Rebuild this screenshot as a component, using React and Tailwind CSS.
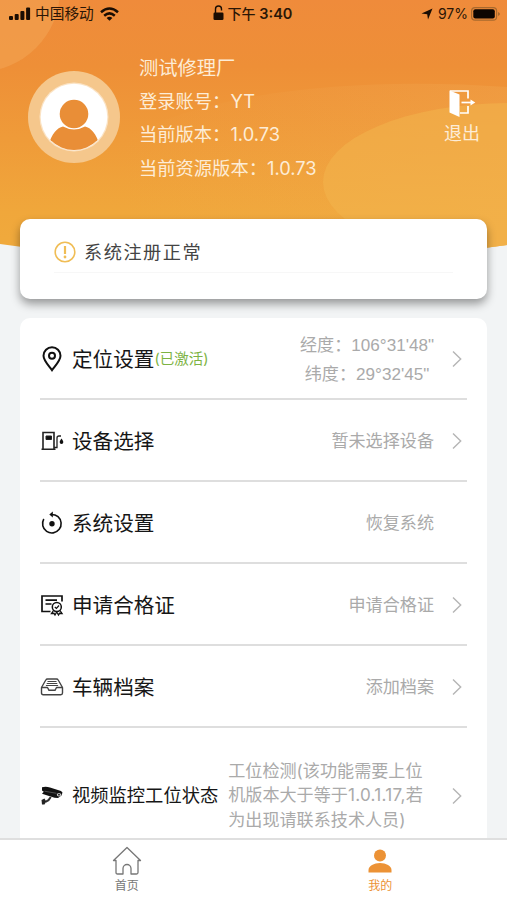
import React from "react";

const LocationIcon = () => (
  <svg width="22" height="26" viewBox="0 0 22 26" fill="none" stroke="#111" strokeWidth="2">
    <path d="M11 24.2C8 20 2.5 14.5 2.5 9.700a8.500 8.500 0 0 1 17 0C19.500 14.500 14 20 11 24.200Z" />
    <circle cx="11" cy="9.800" r="3" />
  </svg>
);

const DeviceIcon = () => (
  <svg width="24" height="22" viewBox="0 0 24 22" fill="none" stroke="#222" strokeWidth="1.600">
    <path d="M3 19V2.500H14V19M1.500 19.300H15.500" />
    <path d="M6 6H11.500V9.500H6Z" fill="#111" strokeWidth="1" />
    <path d="M14 17.500H17V8Q17 6 19 6H21" strokeWidth="1.300" />
    <path d="M21.500 8.500C20.500 10 19.700 11 19.700 12.200a1.800 1.800 0 0 0 3.600 0C23.300 11 22.500 10 21.500 8.500Z" fill="#111" stroke="none" />
  </svg>
);

const ResetIcon = () => (
  <svg width="22" height="24" viewBox="0 0 22 24" fill="none" stroke="#111" strokeWidth="1.600">
    <path d="M2.800 8A9.300 9.300 0 1 0 17 5.700Q14.500 3.500 10 3.500" />
    <path d="M8.300 3.500L11.800 0.600V6.400Z" fill="#111" stroke="none" />
    <circle cx="11" cy="12.800" r="2.700" fill="#111" stroke="none" />
  </svg>
);

const CertificateIcon = () => (
  <svg width="24" height="24" viewBox="0 0 24 24" fill="none" stroke="#111" strokeWidth="1.700">
    <path d="M10.500 18.500H2V3H22V8.500M5.500 7.200H17M5.500 11H11.500" />
    <circle cx="16.800" cy="14" r="4.500" strokeWidth="1.500" />
    <path d="M14.800 14L16.400 15.500L19 12.500" strokeWidth="1.200" />
    <path d="M13.500 17.500L11.500 20.500L14 20.300L15 22L16.700 19L18.500 22L19.500 20.300L22 20.500L20 17.500" strokeWidth="1.300" />
  </svg>
);

const ArchiveIcon = () => (
  <svg width="24" height="20" viewBox="0 0 24 20" fill="none" stroke="#444" strokeWidth="1.400" strokeLinejoin="round">
    <path d="M1.500 10.500L5.800 3Q6.300 2 7.500 2H16.500Q17.700 2 18.200 3L22.500 10.500V16Q22.500 17.700 20.800 17.700H3.200Q1.500 17.700 1.500 16Z" />
    <path d="M1.800 10.500H7.500L9 13.300H15L16.500 10.500H22.200" />
    <path d="M7.500 4.500H16.500M6.700 6.500H17.300M5.900 8.500H18.100" strokeWidth="1.100" />
  </svg>
);

const CameraIcon = () => (
  <svg width="24" height="22" viewBox="0 0 24 22">
    <path d="M2 2.200Q6 1 10 2.500L21 6L22.500 7.500L21.500 10.500L18 13L14.500 12.700L2 8.800L3.800 6.800L2 5.500Z" fill="#111" />
    <path d="M4.500 6.200L16.500 8.300" stroke="#888" strokeWidth="0.500" />
    <ellipse cx="19" cy="9.700" rx="2.200" ry="1.700" fill="#ccc" />
    <circle cx="19" cy="9.700" r="0.900" fill="#111" />
    <path d="M10.800 12L8.500 15.200L5.500 16.800" fill="none" stroke="#333" strokeWidth="2" />
    <path d="M1.500 15L4.500 13.500L6.200 16.500L4.500 19.500L2 19.500Z" fill="#222" />
  </svg>
);

const menuItems = [
  {
    icon: <LocationIcon />,
    label: "定位设置",
    tag: "(已激活)",
    value: ["经度：106°31'48\"", "纬度：29°32'45\""],
    arrow: true,
  },
  { icon: <DeviceIcon />, label: "设备选择", value: ["暂未选择设备"], arrow: true },
  { icon: <ResetIcon />, label: "系统设置", value: ["恢复系统"], arrow: false },
  { icon: <CertificateIcon />, label: "申请合格证", value: ["申请合格证"], arrow: true },
  { icon: <ArchiveIcon />, label: "车辆档案", value: ["添加档案"], arrow: true },
];

const Arrow = () => (
  <svg className="shrink-0" width="10" height="18" viewBox="0 0 10 18" fill="none" stroke="#b5b5b5" strokeWidth="1.400">
    <path d="M1 1.500L8.700 9L1 16.500" />
  </svg>
);

const StatusBar = () => (
  <div className="grid h-7 shrink-0 grid-cols-[1fr_auto_1fr] items-center pl-[9px] pr-[6px] text-[14px] text-[#2a1606]">
    <div className="flex items-center">
      <svg width="22" height="14" viewBox="0 0 22 14" fill="#1a0d03">
        <rect x="0" y="9" width="4" height="4" rx="1" />
        <rect x="5.700" y="7" width="4" height="6" rx="1" />
        <rect x="11.400" y="4" width="4" height="9" rx="1" />
        <rect x="17.100" y="0.500" width="4" height="12.500" rx="1" />
      </svg>
      <span className="ml-[4px] text-[14.700px]">中国移动</span>
      <svg className="ml-[6px]" width="19" height="14" viewBox="0 0 19 14" fill="none" stroke="#1a0d03" strokeWidth="2.500">
        <path d="M1 5.300Q9.500 -2.300 18 5.300" />
        <path d="M4.200 8.700Q9.500 4.100 14.800 8.700" />
        <path d="M6.600 10.900Q9.500 8.700 12.400 10.900L9.500 13.800Z" fill="#1a0d03" stroke="none" />
      </svg>
    </div>
    <div className="flex items-center gap-[4px] pr-[5px]">
      <svg className="-mt-[3px]" width="11" height="16" viewBox="0 0 11 16">
        <path d="M2.500 8V4a3 3 0 0 1 6 0V5.500" fill="none" stroke="#1a0d03" strokeWidth="1.400" />
        <rect x="0.500" y="7.500" width="10" height="7.500" rx="1.300" fill="#1a0d03" />
      </svg>
      <span className="-mt-px whitespace-nowrap font-medium">
        下午 <span className="text-[14.500px] font-semibold">3:40</span>
      </span>
    </div>
    <div className="flex items-center justify-end">
      <svg width="12" height="12" viewBox="0 0 12 12" fill="#1a0d03">
        <path d="M11.500 0.500L7 11.500L6.200 6.300L0.500 5.600Z" />
      </svg>
      <span className="-mt-px ml-[5px] mr-[3px] text-[14px]">97%</span>
      <svg className="-mt-[1px]" width="30" height="14" viewBox="0 0 30 14">
        <rect x="0.600" y="0.600" width="25" height="12.600" rx="3.500" fill="none" stroke="#a8692e" strokeWidth="1.200" />
        <rect x="2.300" y="2.300" width="21.500" height="9.200" rx="2" fill="#0d0501" />
        <path d="M27 5V9Q29 8 29 7T27 5Z" fill="#a8692e" />
      </svg>
    </div>
  </div>
);

const HeaderBackground = () => (
  <svg className="absolute left-0 top-0" width="507" height="265" viewBox="0 0 507 265">
    <defs>
      <linearGradient id="sky" x1="0" y1="0" x2="0" y2="1">
        <stop offset="0" stopColor="#ef8b3b" />
        <stop offset="0.250" stopColor="#ee8f37" />
        <stop offset="0.800" stopColor="#f0a73b" />
        <stop offset="1" stopColor="#f0ab3d" />
      </linearGradient>
      <linearGradient id="band" x1="0" y1="0" x2="1" y2="0">
        <stop offset="0" stopColor="#f3b25c" stopOpacity="0" />
        <stop offset="1" stopColor="#f3b25c" stopOpacity="0.250" />
      </linearGradient>
      <clipPath id="curve">
        <path d="M0 0H507V245Q254 282 0 244Z" />
      </clipPath>
    </defs>
    <g clipPath="url(#curve)">
      <rect width="507" height="265" fill="url(#sky)" />
      <circle cx="-22" cy="-10" r="82" fill="#f3aa5c" opacity="0.450" />
      <path d="M120 140C220 85 380 78 507 87V265H120Z" fill="url(#band)" />
      <ellipse cx="510" cy="182" rx="187" ry="79" fill="#f2b54d" opacity="0.550" />
      <path d="M480 245H507V265H480Z" fill="#f1b146" opacity="0.600" />
    </g>
  </svg>
);

const App = () => {
  return (
    <div className="relative flex h-[900px] w-[507px] flex-col overflow-hidden bg-[#f2f4f5] font-['Inter','Noto_Sans_CJK_SC',sans-serif]">
      <HeaderBackground />

      <div className="relative flex min-h-0 flex-1 flex-col">
        <StatusBar />

        {/* User info */}
        <div className="flex h-[191px] shrink-0 items-start pl-[28px] pr-[27px]">
          <svg className="mt-[43px]" width="92" height="92" viewBox="0 0 92 92">
            <defs>
              <clipPath id="avatar">
                <circle cx="46" cy="46" r="33" />
              </clipPath>
            </defs>
            <circle cx="46" cy="46" r="46" fill="#f5c78c" />
            <circle cx="46" cy="46" r="34.500" fill="#fbe3c4" />
            <circle cx="46" cy="46" r="33.300" fill="#fff" />
            <g clipPath="url(#avatar)">
              <path d="M20 75C24 62 29 57 35 55.500Q46 61.500 57 55.500C63 57 68 62 72 75V80H20Z" fill="#e98e37" />
              <circle cx="46" cy="43" r="14.300" fill="#e98e37" />
            </g>
          </svg>
          <div className="ml-[19px] mt-[24px] flex-1 text-[18.300px] leading-[33.200px] text-[#fdecd6]">
            <p className="text-[19.300px]">测试修理厂</p>
            <p>登录账号：YT</p>
            <p>当前版本：1.0.73</p>
            <p>当前资源版本：1.0.73</p>
          </div>
          <div className="mt-[61px] flex flex-col items-center text-[18px] leading-[31px] text-[#fdecd6]">
            <svg width="28" height="29" viewBox="0 0 28 29" fill="none" stroke="#fff" strokeWidth="1.700">
              <path d="M2 2H20V9.500M20 17V24H12" />
              <path d="M1.500 1.500L11.500 5.500V28L1.500 23.500Z" fill="#fff" stroke="none" />
              <path d="M13.500 13.500H24" />
              <path d="M22.500 10.500L27.300 13.500L22.500 16.500Z" fill="#fff" stroke="none" />
            </svg>
            <span>退出</span>
          </div>
        </div>

        {/* Register status */}
        <div className="mx-5 h-[80px] shrink-0 rounded-[10px] bg-white pl-[34px] pr-[34px] shadow-[0_5px_10px_rgba(0,0,0,0.38)]">
          <div className="flex h-[54px] items-center border-b border-[#f7f7f7] pt-[12px]">
            <svg width="22" height="22" viewBox="0 0 22 22" fill="none" stroke="#f0bd55" strokeWidth="1.600">
              <circle cx="11" cy="11" r="9.800" />
              <path d="M11 5V13" strokeWidth="2.200" />
              <circle cx="11" cy="16" r="1.400" fill="#f0bd55" stroke="none" />
            </svg>
            <span className="ml-[8px] pt-[2px] text-[18.200px] tracking-[1.500px] text-[#444]">系统注册正常</span>
          </div>
        </div>

        {/* Settings list */}
        <div className="mx-5 mt-[19px] rounded-t-[10px] bg-white px-5">
          {menuItems.map((item) => (
            <div
              key={item.label}
              className="flex h-[82px] items-center border-b-2 border-[#dedede] pr-[5px] pt-[2px]"
            >
              <div className="flex w-[24px] justify-center">{item.icon}</div>
              <span className="ml-[8px] pt-[3px] text-[20.600px] text-[#161616]">{item.label}</span>
              {item.tag && <span className="text-[14.500px] text-[#7db343]">{item.tag}</span>}
              <div className="ml-auto pt-px text-center font-['Liberation_Sans','Noto_Sans_CJK_SC',sans-serif] text-[17.100px] leading-[29px] text-[#aaa]">
                {item.value.map((line) => (
                  <p key={line}>{line}</p>
                ))}
              </div>
              <div className="ml-[18px] flex w-[10px]">{item.arrow && <Arrow />}</div>
            </div>
          ))}
          <div className="flex h-[135px] items-center pr-[5px]">
            <CameraIcon />
            <span className="ml-[8px] whitespace-nowrap text-[18.300px] text-[#161616]">视频监控工位状态</span>
            <div className="ml-[10px] whitespace-nowrap text-[17.100px] leading-[24.300px] text-[#aaa]">
              <p>工位检测(该功能需要上位</p>
              <p>
                机版本大于等于<span className="tracking-[0.300px]">1.0.1.17,</span>若
              </p>
              <p>为出现请联系技术人员)</p>
            </div>
            <div className="ml-auto flex">
              <Arrow />
            </div>
          </div>
        </div>
      </div>

      {/* Bottom tabs */}
      <div className="relative grid h-[62px] shrink-0 grid-cols-2 border-t-2 border-[#dfdfdf] bg-white text-[12px] leading-[19px]">
        <div className="flex flex-col items-center pt-[6px] text-[#777]">
          <svg width="30" height="30" viewBox="0 0 30 30" fill="none" stroke="#777" strokeWidth="1.300" strokeLinejoin="round">
            <path d="M1.500 14.500L15 1.500L28.500 14.500H26V26.500Q26 28 24.500 28H19V22.500a4 4 0 0 0 -8 0V28H5.500Q4 28 4 26.500V14.500Z" />
          </svg>
          <span>首页</span>
        </div>
        <div className="flex flex-col items-center pt-[6px] text-[#ec9235]">
          <svg width="30" height="30" viewBox="0 0 30 30" fill="#ec9235">
            <circle cx="15" cy="9.500" r="6" />
            <path d="M3.500 26.500V24C3.500 20 9 17 15 17S26.500 20 26.500 24V26.500Z" />
          </svg>
          <span>我的</span>
        </div>
      </div>
    </div>
  );
};

export default App;
